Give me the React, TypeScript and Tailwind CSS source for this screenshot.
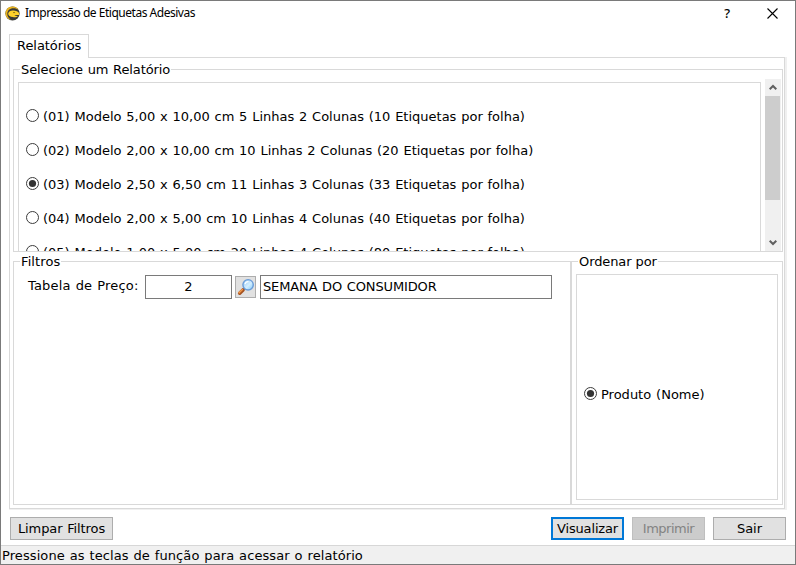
import React from "react";

const verdana = "font-['DejaVu_Sans',Verdana,sans-serif] text-[13px] leading-4";

function Radio({ checked = false }: { checked?: boolean }) {
  return (
    <svg width="13" height="13" viewBox="0 0 13 13" className="block shrink-0">
      <circle cx="6.5" cy="6.5" r="6" fill="#fff" stroke="#3c3c3c" />
      {checked && <circle cx="6.5" cy="6.5" r="3.6" fill="#333" />}
    </svg>
  );
}

function AppLogo() {
  return (
    <svg width="15" height="15" viewBox="0 0 15 15" className="block shrink-0">
      <circle cx="7.5" cy="7.5" r="7.1" fill="#3a3a37" />
      <path d="M0.500 7.500C0.500 3.300 3.500 0.500 7.500 0.500c3 0 5.200 1.500 6.300 3.800C11.500 2.300 8.300 1.900 5.900 2.800 3.500 3.700 2.200 5.600 2.300 8c.1 2.400 1.400 4.200 3.600 5.700C2.700 13.200.500 10.700.500 7.500Z" fill="#e9b41f" />
      <path d="M3.200 7.800C3.600 5.500 5.700 4.500 8.200 4.600c2.700.1 4.900.9 6 2.600l-.2 1.900-4.700-.1c.9.8 2.100 1.200 3.700 1-1.200 1.200-3.100 1.500-5.100 1.100C5.200 10.700 3.200 9.700 3.200 7.800Z" fill="#ffd12b" />
      <path d="M8.100 6.600h2" stroke="#5b4a16" strokeWidth="0.7" />
    </svg>
  );
}

function Magnifier() {
  return (
    <svg width="18" height="18" viewBox="0 0 18 18" className="block">
      <defs>
        <linearGradient id="lens" x1="0" y1="0" x2="1" y2="1">
          <stop offset="0" stopColor="#8fc6f6" />
          <stop offset="0.55" stopColor="#d3eeff" />
          <stop offset="1" stopColor="#7cc8f7" />
        </linearGradient>
      </defs>
      <path d="M7.500 10.400 5.900 12" stroke="#7d8798" strokeWidth="2.400" />
      <path d="M6 11.900 2.700 15.200" stroke="#a65322" strokeWidth="3.600" strokeLinecap="round" />
      <path d="M5.400 11.500 2.100 14.800" stroke="#f29a4b" strokeWidth="1.600" strokeLinecap="round" />
      <circle cx="11.100" cy="6.800" r="5.200" fill="url(#lens)" stroke="#6b9cd8" strokeWidth="1.400" />
      <path d="M8 6.200c.4-1.700 1.700-2.600 3.500-2.500" fill="none" stroke="#fff" strokeWidth="1.200" />
    </svg>
  );
}

const models = [
  { text: "(01) Modelo 5,00 x 10,00 cm 5 Linhas 2 Colunas (10 Etiquetas por folha)" },
  { text: "(02) Modelo 2,00 x 10,00 cm 10 Linhas 2 Colunas (20 Etiquetas por folha)" },
  { text: "(03) Modelo 2,50 x 6,50 cm 11 Linhas 3 Colunas (33 Etiquetas por folha)", checked: true },
  { text: "(04) Modelo 2,00 x 5,00 cm 10 Linhas 4 Colunas (40 Etiquetas por folha)" },
  { text: "(05) Modelo 1,00 x 5,00 cm 20 Linhas 4 Colunas (80 Etiquetas por folha)" },
];

export default function App() {
  return (
    <div className={`flex h-[565px] w-[796px] flex-col overflow-hidden border border-[#7a7a7a] bg-white text-black ${verdana}`}>
      <header className="flex h-[33px] shrink-0 items-start pl-1 pt-[4px] font-['Noto_Sans','Open_Sans',sans-serif] text-[12px]">
        <div className="pt-px"><AppLogo /></div>
        <span className="ml-[5px] whitespace-nowrap tracking-[-0.48px]">Impressão de Etiquetas Adesivas</span>
        <span className="ml-auto mr-[37px] text-[13px] font-medium">?</span>
        <svg width="11" height="11" viewBox="0 0 11 11" className="mr-[17px] mt-[3px]">
          <path d="M.5.5l10 10M10.500.5l-10 10" stroke="#000" strokeWidth="1.100" />
        </svg>
      </header>

      <div className="z-10 ml-2 flex h-6 w-20 shrink-0 border border-b-0 border-[#d9d9d9] bg-white pl-[7px] pt-[3px]">
        <span className="tracking-[-0.05px]">Relatórios</span>
      </div>

      <main className="-mt-px ml-2 h-[453px] w-[778px] shrink-0 border-b border-r-2 border-[#f0f0f0]">
        <div className="h-[452px] w-[776px] border border-[#d9d9d9] pl-[3px] pt-[11px]">
          <section className="h-[183px] w-[770px] border border-[#d9d9d9]">
            <h2 className="-mt-2 ml-[6px] w-fit bg-white px-px tracking-[-0.1px] [word-spacing:0.7px]">Selecione um Relatório</h2>
            <div className="flex h-[173px] overflow-hidden">
              <div className="ml-1 mt-[4px] h-[240px] w-[743px] border border-[#d9d9d9] pl-[7px] pt-[25px]">
                {models.map((m) => (
                  <label key={m.text} className="flex h-[34px] items-start whitespace-nowrap">
                    <span className="mt-px"><Radio checked={m.checked} /></span>
                    <span className="ml-1 mt-px [word-spacing:0.66px]">{m.text}</span>
                  </label>
                ))}
              </div>
              <div className="ml-1 mt-px flex h-[172px] w-4 flex-col bg-[#f0f0f0]">
                <div className="flex h-[17px] items-center pl-1">
                  <svg width="8" height="7" viewBox="0 0 8 7"><path d="M.7 5.300 4 2l3.300 3.300" fill="none" stroke="#606060" strokeWidth="2" /></svg>
                </div>
                <div className="h-[104px] w-[15px] bg-[#cdcdcd]" />
                <div className="mt-auto flex h-[17px] items-center pl-1">
                  <svg width="8" height="7" viewBox="0 0 8 7"><path d="M.7 1.700 4 5l3.300-3.300" fill="none" stroke="#606060" strokeWidth="2" /></svg>
                </div>
              </div>
            </div>
          </section>

          <div className="mt-[9px] flex h-[244px] w-[770px]">
            <section className="w-[558px] border border-[#d9d9d9]">
              <h2 className="-mt-2 ml-[6px] w-fit bg-white px-px tracking-[0.1px]">Filtros</h2>
              <div className="mt-[5px] flex items-start">
                <span className="ml-[14px] mt-[3px] w-[117px] whitespace-nowrap tracking-[0.18px] [word-spacing:0.7px]">Tabela de Preço:</span>
                <div className="h-6 w-[87px] border border-[#7a7a7a] pt-[3px] text-center">2</div>
                <button className="ml-[3px] mt-px flex h-[22px] w-[21px] items-center justify-center border border-[#adadad] bg-[#e1e1e1]"><Magnifier /></button>
                <div className="ml-1 h-6 w-[292px] whitespace-nowrap border border-[#7a7a7a] pl-[2px] pt-[3px] tracking-[-0.13px] [word-spacing:0.7px]">SEMANA DO CONSUMIDOR</div>
              </div>
            </section>
            <section className="w-[212px] border border-[#d9d9d9]">
              <h2 className="-mt-2 ml-[6px] w-fit bg-white px-px tracking-[-0.1px]">Ordenar por</h2>
              <div className="ml-1 mt-[4px] flex h-[226px] w-[202px] items-center border border-[#d9d9d9] pl-[7px] pt-[14px]">
                <span className="mb-px"><Radio checked /></span>
                <span className="ml-1 mt-px whitespace-nowrap [word-spacing:0.8px]">Produto (Nome)</span>
              </div>
            </section>
          </div>
        </div>
      </main>

      <div className="flex h-[35px] shrink-0 items-start gap-2 pl-[9px] pr-[9px] pt-[7px]">
        <button className="h-[23px] w-[103px] whitespace-nowrap border border-[#adadad] bg-[#e1e1e1] tracking-[-0.1px] [word-spacing:0.7px]">Limpar Filtros</button>
        <button className="ml-auto h-[23px] w-[73px] whitespace-nowrap border-2 border-[#0078d7] bg-[#e1e1e1] tracking-[-0.15px]">Visualizar</button>
        <button className="h-[23px] w-[73px] whitespace-nowrap border border-[#bfbfbf] bg-[#cccccc] tracking-[-0.5px] text-[#838383]">Imprimir</button>
        <button className="h-[23px] w-[73px] whitespace-nowrap border border-[#adadad] bg-[#e1e1e1]">Sair</button>
      </div>
      <footer className="h-[19px] shrink-0 border-t border-[#d7d7d7] bg-[#f0f0f0] pl-px pt-[2px] tracking-[0.09px] [word-spacing:0.65px]">Pressione as teclas de função para acessar o relatório</footer>
    </div>
  );
}
